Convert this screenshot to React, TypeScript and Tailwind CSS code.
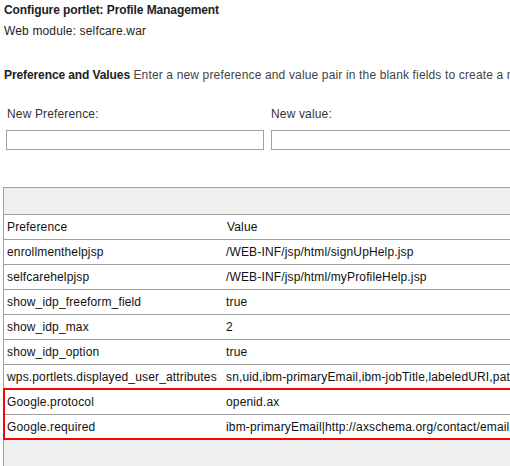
import React from "react";

const rows: [string, string][] = [
  ["enrollmenthelpjsp", "/WEB-INF/jsp/html/signUpHelp.jsp"],
  ["selfcarehelpjsp", "/WEB-INF/jsp/html/myProfileHelp.jsp"],
  ["show_idp_freeform_field", "true"],
  ["show_idp_max", "2"],
  ["show_idp_option", "true"],
  ["wps.portlets.displayed_user_attributes", "sn,uid,ibm-primaryEmail,ibm-jobTitle,labeledURI,path,preferredLanguage"],
  ["Google.protocol", "openid.ax"],
  ["Google.required", "ibm-primaryEmail|http://axschema.org/contact/email"],
];

export default function App() {
  return (
    <div
      className="w-[510px] h-[466px] overflow-hidden bg-white text-[12px] leading-[14px] text-[#222] tracking-[0.15px]"
      style={{ fontFamily: '"Liberation Sans", Arial, sans-serif' }}
    >
      <div className="pl-[4px] pt-[3px] font-bold text-[#222] tracking-[-0.1px]">Configure portlet: Profile Management</div>
      <div className="pl-[4px] mt-[7px] text-[#222]">Web module: selfcare.war</div>
      <div className="pl-[4px] mt-[30px] whitespace-nowrap">
        <span className="font-bold text-[#222] tracking-[-0.1px]">Preference and Values</span>{" "}
        <span className="text-[#444]">Enter a new preference and value pair in the blank fields to create a new preference.</span>
      </div>
      <div className="flex gap-[7px] pl-[6px] mt-[25px] w-[800px]">
        <div className="flex flex-col w-[258px]">
          <div className="pl-[1px] text-[#333]">New Preference:</div>
          <div className="mt-[9px] h-[20px] border border-[#a0a0a0] bg-white" />
        </div>
        <div className="flex flex-col w-[400px]">
          <div className="text-[#333]">New value:</div>
          <div className="mt-[9px] h-[20px] border border-[#a0a0a0] bg-white" />
        </div>
      </div>
      <div className="relative ml-[3px] mt-[37px] w-[700px] border-l border-t border-[#a0a0a0]">
        <div className="h-[27px] bg-[#efefef] border-b border-[#a0a0a0]" />
        <div className="flex h-[25px] items-center border-b border-[#a0a0a0] text-[#111]">
          <div className="w-[219px] pl-[3px] whitespace-nowrap">Preference</div>
          <div className="flex-1 pl-[4px] whitespace-nowrap">Value</div>
        </div>
        {rows.map(([k, v]) => (
          <div key={k} className="flex h-[25px] items-center border-b border-[#a0a0a0] text-[#111]">
            <div className="w-[219px] pl-[3px] whitespace-nowrap">{k}</div>
            <div className="flex-1 pl-[3px] whitespace-nowrap">{v}</div>
          </div>
        ))}
        <div className="h-[40px] bg-[#efefef]" />
        <div className="absolute left-[-1px] top-[200px] w-[700px] h-[52px] border-2 border-[#ff0000] pointer-events-none" />
      </div>
    </div>
  );
}
